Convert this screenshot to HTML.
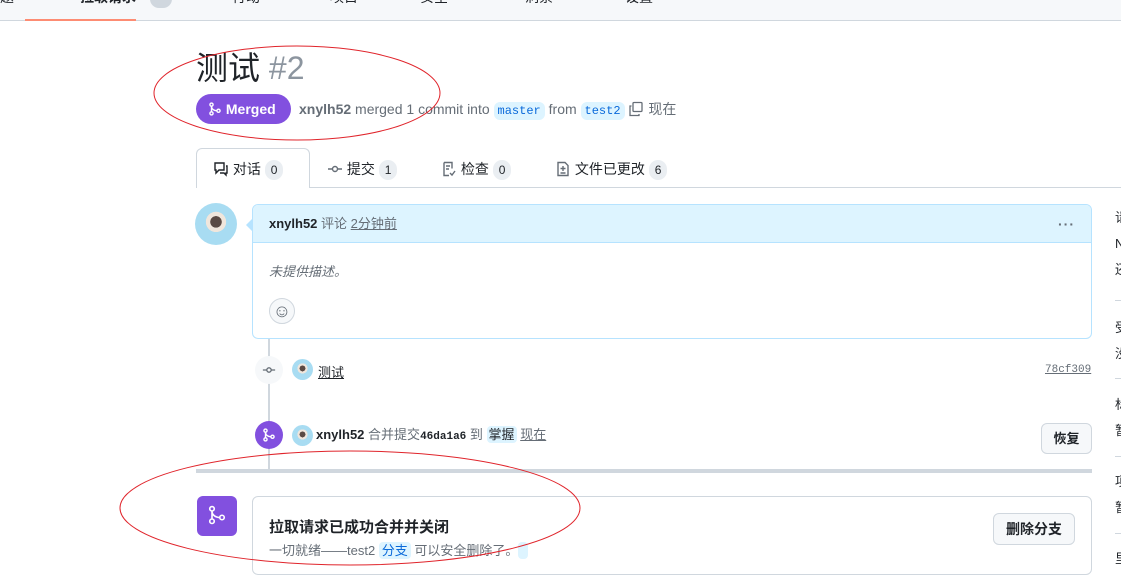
<!DOCTYPE html>
<html><head><meta charset="utf-8"><style>
*{margin:0;padding:0;box-sizing:border-box}
body{width:1121px;height:578px;overflow:hidden;background:#fff;font-family:"Liberation Sans","Noto Sans CJK SC",sans-serif;color:#1f2328;position:relative;font-size:14px}
.a{position:absolute;white-space:nowrap}
.code{font-family:"Liberation Mono",monospace;font-size:12px;color:#0969da;background:#ddf4ff;border-radius:6px;padding:2px 4px}
.badge{display:inline-block;background:#eaeef2;border-radius:10px;font-size:12px;padding:1px 6px;color:#1f2328}
.av{border-radius:50%;background:radial-gradient(circle at 50% 45%,#5a4a44 0 18%,#f0e6dc 19% 32%,#a8dcf2 33%);}
.btn{border:1px solid #d0d7de;background:#f6f8fa;border-radius:6px;font-size:14px;font-weight:600;text-align:center}
</style></head><body>
<div class="a" style="left:0;top:0;width:1121px;height:21px;background:#f6f8fa;border-bottom:1px solid #d0d7de"></div>
<div class="a" style="left:25px;top:19px;width:111px;height:2px;background:#fd8c73"></div>
<div class="a" style="top:-13px;left:0;font-size:14px;line-height:20px">题</div>
<div class="a" style="top:-13px;left:80px;font-size:14px;font-weight:600;line-height:20px">拉取请求</div>
<div class="a" style="top:-10px;left:150px;width:22px;height:18px;border-radius:9px;background:#d0d7de"></div>
<div class="a" style="top:-13px;left:232px;line-height:20px">行动</div>
<div class="a" style="top:-13px;left:330px;line-height:20px">项目</div>
<div class="a" style="top:-13px;left:420px;line-height:20px">安全</div>
<div class="a" style="top:-13px;left:525px;line-height:20px">洞察</div>
<div class="a" style="top:-13px;left:625px;line-height:20px">设置</div>

<div class="a" style="left:196px;top:48px;font-size:32px;line-height:40px">测试 <span style="color:#8c959f;font-weight:300">#2</span></div>
<div class="a" style="left:196px;top:94px;width:95px;height:30px;border-radius:15px;background:#8250df;color:#fff;font-weight:600;font-size:14px;line-height:30px;padding-left:12px">
<svg width="14" height="14" viewBox="0 0 16 16" style="vertical-align:-2px" fill="none" stroke="#fff" stroke-width="1.6"><circle cx="4" cy="3" r="1.8"/><circle cx="4" cy="13" r="1.8"/><circle cx="12" cy="10" r="1.8"/><path d="M4 5v6M4 5c0 3 3 5 6 5"/></svg> Merged</div>
<div class="a" style="left:299px;top:100px;color:#656d76;line-height:18px"><b style="color:#656d76">xnylh52</b> merged 1 commit into <span class="code">master</span> from <span class="code">test2</span> <svg width="16" height="16" viewBox="0 0 16 16" style="vertical-align:-3px" fill="none" stroke="#656d76" stroke-width="1.3"><rect x="5" y="1.5" width="9" height="9" rx="1"/><path d="M3.5 5H2v9.5h9V13"/></svg> 现在</div>

<div class="a" style="left:196px;top:187px;width:925px;height:1px;background:#d0d7de"></div>
<div class="a" style="left:196px;top:148px;width:114px;height:40px;border:1px solid #d0d7de;border-bottom:none;border-radius:6px 6px 0 0;background:#fff"></div>
<div class="a" style="left:213px;top:160px;line-height:18px"><svg width="16" height="16" viewBox="0 0 16 16" style="vertical-align:-3px" fill="none" stroke="#1f2328" stroke-width="1.4"><path d="M2 2h9v7H6l-3 3V9H2z"/><path d="M13 5h1v7h-1v2l-2-2H7"/></svg> 对话 <span class="badge">0</span></div>
<div class="a" style="left:327px;top:160px;line-height:18px;color:#1f2328"><svg width="16" height="16" viewBox="0 0 16 16" style="vertical-align:-3px" fill="none" stroke="#656d76" stroke-width="1.4"><circle cx="8" cy="8" r="2.5"/><path d="M1 8h4.5M10.5 8H15"/></svg> 提交 <span class="badge">1</span></div>
<div class="a" style="left:441px;top:160px;line-height:18px"><svg width="16" height="16" viewBox="0 0 16 16" style="vertical-align:-3px" fill="none" stroke="#656d76" stroke-width="1.4"><path d="M3 1.5h8v6M3 1.5v13h5M5 5h4M5 8h3M9 12l2 2 3-4"/></svg> 检查 <span class="badge">0</span></div>
<div class="a" style="left:555px;top:160px;line-height:18px"><svg width="16" height="16" viewBox="0 0 16 16" style="vertical-align:-3px" fill="none" stroke="#656d76" stroke-width="1.4"><path d="M3 1.5h7l3 3v10H3z"/><path d="M8 5v5M5.5 7.5h5M5.5 12h5"/></svg> 文件已更改 <span class="badge">6</span></div>

<div class="a" style="left:268px;top:338px;width:2px;height:132px;background:#d0d7de"></div>

<div class="a av" style="left:195px;top:203px;width:42px;height:42px"></div>
<div class="a" style="left:252px;top:204px;width:840px;height:135px;border:1px solid #b6e3ff;border-radius:6px;overflow:hidden">
 <div style="height:38px;background:#ddf4ff;border-bottom:1px solid #b6e3ff;padding:11px 16px;line-height:16px;font-size:13px"><b style="font-weight:600">xnylh52</b> <span style="color:#656d76">评论 <u>2分钟前</u></span><span style="float:right;color:#656d76;font-weight:bold;letter-spacing:1px;font-size:14px">···</span></div>
 <div style="padding:18px 16px;font-style:italic;color:#656d76;font-size:13px">未提供描述。</div>
 <div style="margin-left:16px;width:26px;height:26px;border:1px solid #d0d7de;border-radius:50%;background:#f6f8fa;text-align:center;line-height:24px;color:#656d76;font-size:18px">☺</div>
</div>
<div class="a" style="left:246px;top:218px;width:0;height:0;border:7px solid transparent;border-right-color:#b6e3ff;border-left:none"></div>

<div class="a" style="left:255px;top:356px;width:28px;height:28px;border-radius:50%;background:#f6f8fa;text-align:center;line-height:28px"><svg width="14" height="14" viewBox="0 0 16 16" style="vertical-align:-2px" fill="none" stroke="#656d76" stroke-width="1.5"><circle cx="8" cy="8" r="2.5"/><path d="M1 8h4.5M10.5 8H15"/></svg></div>
<div class="a av" style="left:292px;top:359px;width:21px;height:21px"></div>
<div class="a" style="left:318px;top:362px;font-size:13px;text-decoration:underline">测试</div>
<div class="a" style="left:1045px;top:364px;font-family:'Liberation Mono',monospace;font-size:11px;color:#656d76;text-decoration:underline">78cf309</div>

<div class="a" style="left:255px;top:421px;width:28px;height:28px;border-radius:50%;background:#8250df;text-align:center;line-height:28px"><svg width="14" height="14" viewBox="0 0 16 16" style="vertical-align:-2px" fill="none" stroke="#fff" stroke-width="1.6"><circle cx="4" cy="3" r="1.8"/><circle cx="4" cy="13" r="1.8"/><circle cx="12" cy="10" r="1.8"/><path d="M4 5v6M4 5c0 3 3 5 6 5"/></svg></div>
<div class="a av" style="left:292px;top:425px;width:21px;height:21px"></div>
<div class="a" style="left:316px;top:426px;font-size:13px;line-height:18px"><b style="font-weight:600">xnylh52</b> <span style="color:#656d76">合并提交</span><b style="font-family:'Liberation Mono',monospace;font-size:11px">46da1a6</b> <span style="color:#656d76">到</span> <span style="background:#ddf4ff;border-radius:4px;padding:1px 2px">掌握</span> <u style="color:#656d76">现在</u></div>
<div class="a btn" style="left:1041px;top:423px;width:51px;height:31px;line-height:29px;font-size:13px">恢复</div>

<div class="a" style="left:196px;top:469px;width:896px;height:4px;background:#d0d7de"></div>

<div class="a" style="left:197px;top:496px;width:40px;height:40px;border-radius:6px;background:#8250df;text-align:center;line-height:40px"><svg width="20" height="20" viewBox="0 0 16 16" style="vertical-align:-4px" fill="none" stroke="#fff" stroke-width="1.3"><circle cx="4" cy="3" r="1.8"/><circle cx="4" cy="13" r="1.8"/><circle cx="12" cy="10" r="1.8"/><path d="M4 5v6M4 5c0 3 3 5 6 5"/></svg></div>
<div class="a" style="left:252px;top:496px;width:840px;height:79px;border:1px solid #d0d7de;border-radius:6px"></div>
<div class="a" style="left:269px;top:516px;font-size:15px;font-weight:700">拉取请求已成功合并并关闭</div>
<div class="a" style="left:269px;top:540px;font-size:13px;color:#656d76">一切就绪——test2 <span style="color:#0969da;background:#ddf4ff;border-radius:4px;padding:1px 3px">分支</span> 可以安全删除了。<span style="background:#ddf4ff;border-radius:4px;padding:1px 5px"></span></div>
<div class="a btn" style="left:993px;top:513px;width:82px;height:32px;line-height:30px">删除分支</div>

<div class="a" style="left:1115px;top:205px;font-size:13px;line-height:26px;color:#1f2328">请<br>N<br>还</div>
<div class="a" style="left:1115px;top:300px;width:6px;height:1px;background:#d0d7de"></div>
<div class="a" style="left:1115px;top:315px;font-size:13px;line-height:26px">受<br>没</div>
<div class="a" style="left:1115px;top:378px;width:6px;height:1px;background:#d0d7de"></div>
<div class="a" style="left:1115px;top:392px;font-size:13px;line-height:26px">标<br>暂</div>
<div class="a" style="left:1115px;top:456px;width:6px;height:1px;background:#d0d7de"></div>
<div class="a" style="left:1115px;top:469px;font-size:13px;line-height:26px">项<br>暂</div>
<div class="a" style="left:1115px;top:533px;width:6px;height:1px;background:#d0d7de"></div>
<div class="a" style="left:1115px;top:546px;font-size:13px;line-height:26px">里</div>

<svg class="a" style="left:0;top:0" width="1121" height="578"><ellipse cx="297" cy="93" rx="143" ry="47" fill="none" stroke="#e0242b" stroke-width="1"/><ellipse cx="350" cy="508" rx="230" ry="57" fill="none" stroke="#e0242b" stroke-width="1"/></svg>
</body></html>
